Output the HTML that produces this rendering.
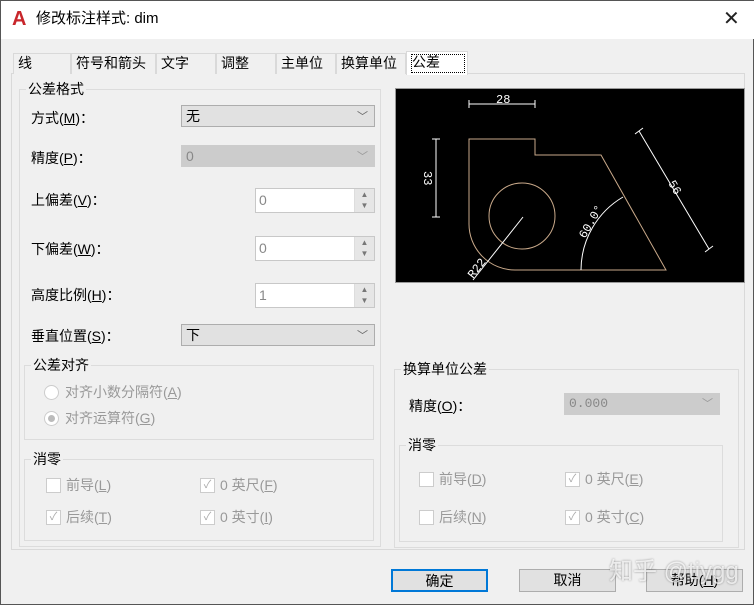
<!DOCTYPE html>
<html><head><meta charset="utf-8"><style>
*{margin:0;padding:0;box-sizing:border-box}
body{width:754px;height:605px;background:#f0f0f0;font-family:"Liberation Sans","Noto Sans CJK SC",sans-serif;font-size:14px;line-height:16px;color:#000;position:relative;overflow:hidden;border:1px solid #555}
.a{position:absolute}
.title{left:0;top:0;width:754px;height:38px;background:#fff}
.tab{top:52px;height:21px;border:1px solid #d9d9d9;border-bottom:none;background:#f0f0f0;padding-left:4px;line-height:19px;font-size:14px}
.panel{left:10px;top:72px;width:734px;height:477px;border:1px solid #d9d9d9;background:#f0f0f0}
.grp{border:1px solid #dcdcdc}
.lg{background:#f0f0f0;padding:0 2px;font-size:14px;line-height:16px}
.dd{height:22px;border:1px solid #adadad;background:#e1e1e1;padding-left:4px;line-height:20px;font-size:14px}
.dd.dis{border-color:#ccc;background:#ccc;color:#888}
.chev{position:absolute;right:6px;top:1px;font-size:11px;color:#666}
.sp{height:25px;border:1px solid #c8c8c8;background:#fff;color:#888;padding-left:3px;line-height:22px}
.spb{position:absolute;right:0;top:0;width:20px;height:23px;background:#e6e6e6;border-left:1px solid #ddd;font-size:8px;color:#777;text-align:center;line-height:11px}
.gr{color:#999}
.cb{width:15px;height:15px;border:1px solid #ccc;background:#fff;font-size:11px;color:#aaa;text-align:center;line-height:13px}
.btn{top:568px;width:97px;height:23px;border:1px solid #adadad;background:#e1e1e1;text-align:center;line-height:21px}
</style></head><body>
<div class="a title"></div>
<div class="a" style="left:11px;top:8px;font-weight:bold;color:#c8262b;font-size:20px;line-height:20px">A</div>
<div class="a" style="left:35px;top:10px;font-size:15px">修改标注样式: dim</div>
<div class="a" style="left:722px;top:8px;font-size:20px;line-height:20px;color:#222">✕</div>

<div class="a panel"></div>
<div class="a tab" style="left:12px;width:58px">线</div>
<div class="a tab" style="left:70px;width:85px">符号和箭头</div>
<div class="a tab" style="left:155px;width:60px">文字</div>
<div class="a tab" style="left:215px;width:60px">调整</div>
<div class="a tab" style="left:275px;width:60px">主单位</div>
<div class="a tab" style="left:335px;width:70px">换算单位</div>
<div class="a tab" style="left:405px;width:62px;top:50px;height:24px;background:#fff;border-color:#d9d9d9"><span style="display:block;border:1px dotted #000;margin:2px 2px 0 0;line-height:15px;height:19px">公差</span></div>

<div class="a grp" style="left:18px;top:88px;width:362px;height:458px"></div>
<div class="a lg" style="left:25px;top:80px">公差格式</div>
<div class="a" style="left:30px;top:109px">方式(<u>M</u>)：</div>
<div class="a dd" style="left:180px;top:104px;width:194px">无<span class="chev">﹀</span></div>
<div class="a" style="left:30px;top:149px">精度(<u>P</u>)：</div>
<div class="a dd dis" style="left:180px;top:144px;width:194px">0<span class="chev" style="color:#999">﹀</span></div>
<div class="a" style="left:30px;top:191px">上偏差(<u>V</u>)：</div>
<div class="a sp" style="left:254px;top:187px;width:120px">0<div class="spb">▲<br>▼</div></div>
<div class="a" style="left:30px;top:240px">下偏差(<u>W</u>)：</div>
<div class="a sp" style="left:254px;top:235px;width:120px">0<div class="spb">▲<br>▼</div></div>
<div class="a" style="left:30px;top:286px">高度比例(<u>H</u>)：</div>
<div class="a sp" style="left:254px;top:282px;width:120px">1<div class="spb">▲<br>▼</div></div>
<div class="a" style="left:30px;top:327px">垂直位置(<u>S</u>)：</div>
<div class="a dd" style="left:180px;top:323px;width:194px">下<span class="chev">﹀</span></div>

<div class="a grp" style="left:23px;top:364px;width:350px;height:75px"></div>
<div class="a lg" style="left:30px;top:356px">公差对齐</div>
<div class="a" style="left:43px;top:384px;width:15px;height:15px;border:1px solid #ccc;border-radius:50%;background:#fff"></div>
<div class="a gr" style="left:64px;top:383px">对齐小数分隔符(<u>A</u>)</div>
<div class="a" style="left:43px;top:410px;width:15px;height:15px;border:1px solid #ccc;border-radius:50%;background:#fff"><div style="width:7px;height:7px;border-radius:50%;background:#bbb;margin:3px"></div></div>
<div class="a gr" style="left:64px;top:409px">对齐运算符(<u>G</u>)</div>

<div class="a grp" style="left:23px;top:458px;width:350px;height:82px"></div>
<div class="a lg" style="left:30px;top:450px">消零</div>
<div class="a cb" style="left:45px;top:477px"></div><div class="a gr" style="left:65px;top:476px">前导(<u>L</u>)</div>
<div class="a cb" style="left:199px;top:477px">✓</div><div class="a gr" style="left:219px;top:476px">0 英尺(<u>F</u>)</div>
<div class="a cb" style="left:45px;top:509px">✓</div><div class="a gr" style="left:65px;top:508px">后续(<u>T</u>)</div>
<div class="a cb" style="left:199px;top:509px">✓</div><div class="a gr" style="left:219px;top:508px">0 英寸(<u>I</u>)</div>

<svg class="a" style="left:394px;top:87px" width="350" height="195" viewBox="394 87 350 195">
<rect x="394" y="87" width="350" height="195" fill="#000" stroke="#999" stroke-width="2"/>
<g fill="none" stroke="#c9a98a" stroke-width="1">
<path d="M468 138 H534 V154 H600 L665 269 H514 A46 46 0 0 1 468 222 Z"/>
<circle cx="521" cy="215" r="33"/>
</g>
<g fill="none" stroke="#fff" stroke-width="1">
<path d="M468 103 H534 M468 99 V107 M534 99 V107"/>
<path d="M435 138 V216 M431 138 H439 M431 216 H439"/>
<path d="M638 130 L708 248 M634 133 L642 127 M704 251 L712 245"/>
<path d="M522 216 L472 279"/>
<path d="M580 269 A85 85 0 0 1 622 196"/>
</g>
<g fill="#fff" font-family="Liberation Mono,monospace" font-size="12">
<text x="495" y="102">28</text>
<text x="0" y="0" transform="translate(423,170) rotate(90)">33</text>
<text x="0" y="0" transform="translate(667,182) rotate(60)">56</text>
<text x="0" y="0" transform="translate(472,278) rotate(-52)">R22</text>
<text x="0" y="0" transform="translate(584,238) rotate(-60)">60.0°</text>
</g>
</svg>

<div class="a grp" style="left:393px;top:368px;width:345px;height:179px"></div>
<div class="a lg" style="left:400px;top:360px">换算单位公差</div>
<div class="a" style="left:408px;top:397px">精度(<u>O</u>)：</div>
<div class="a dd dis" style="left:563px;top:392px;width:156px;font-family:'Liberation Mono',monospace;font-size:13px">0.000<span class="chev" style="color:#999">﹀</span></div>
<div class="a grp" style="left:398px;top:444px;width:324px;height:97px"></div>
<div class="a lg" style="left:405px;top:436px">消零</div>
<div class="a cb" style="left:418px;top:471px"></div><div class="a gr" style="left:438px;top:470px">前导(<u>D</u>)</div>
<div class="a cb" style="left:564px;top:471px">✓</div><div class="a gr" style="left:584px;top:470px">0 英尺(<u>E</u>)</div>
<div class="a cb" style="left:418px;top:509px"></div><div class="a gr" style="left:438px;top:508px">后续(<u>N</u>)</div>
<div class="a cb" style="left:564px;top:509px">✓</div><div class="a gr" style="left:584px;top:508px">0 英寸(<u>C</u>)</div>

<div class="a btn" style="left:390px;border:2px solid #0078d7">确定</div>
<div class="a btn" style="left:518px">取消</div>
<div class="a btn" style="left:645px">帮助(<u>H</u>)</div>
<div class="a" style="left:608px;top:558px;font-size:24px;line-height:26px;color:rgba(255,255,255,0.75);text-shadow:0 0 2px rgba(0,0,0,0.4)">知乎 @tiygg</div>
</body></html>
